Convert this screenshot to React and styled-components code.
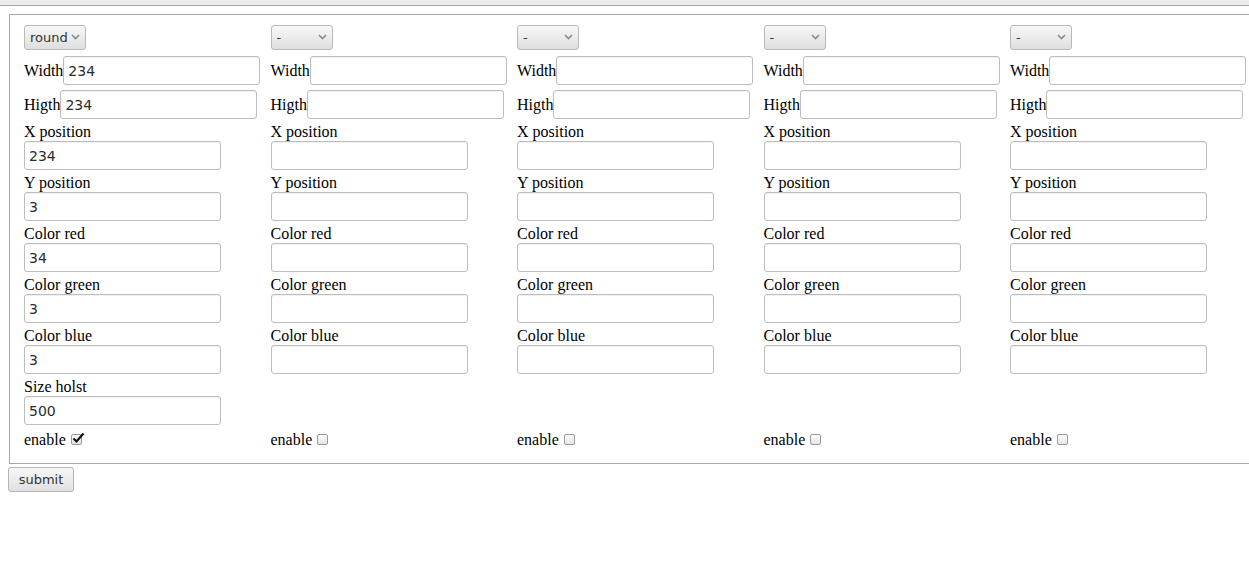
import React from "react";
import styled, { createGlobalStyle } from "styled-components";

const GlobalStyle = createGlobalStyle`
  html, body {
    margin: 0;
    padding: 0;
    background: #ffffff;
    overflow: hidden;
  }
  body {
    font-family: "Liberation Serif", "Times New Roman", serif;
    font-size: 16px;
    color: #000;
  }
`;

const TopBar = styled.div`
  height: 5px;
  background: #ececec;
  border-bottom: 1px solid #a8a8a8;
`;

const Page = styled.form`
  padding: 8px 0 0 8px;
`;

const Fieldset = styled.fieldset`
  margin: 0 0 3px 1px;
  width: 1262px;
  padding: 10px 0 14px 14px;
  border: 1px solid #a9a9a9;
  box-sizing: border-box;
  min-width: 0;
`;

const Columns = styled.div`
  display: grid;
  grid-template-columns: repeat(5, 246.5px);
  align-items: stretch;
`;

const Column = styled.div`
  display: flex;
  flex-direction: column;
  align-items: flex-start;
`;

const SelectWrap = styled.div`
  position: relative;
  width: 62px;
  height: 25px;
  margin-bottom: 6px;
`;

const Select = styled.select`
  appearance: none;
  width: 62px;
  height: 25px;
  box-sizing: border-box;
  padding: 0 0 0 5px;
  border: 1px solid #b9b9b9;
  border-radius: 3px;
  background: linear-gradient(#f8f8f8, #dedede);
  font-family: "DejaVu Sans", Verdana, sans-serif;
  font-size: 13px;
  color: #333;
  outline: none;
`;

const Chevron = styled.svg`
  position: absolute;
  right: 6px;
  top: 9px;
  width: 9px;
  height: 6px;
  pointer-events: none;
`;

const InlineRow = styled.label`
  display: flex;
  align-items: center;
  height: 29px;
  margin-bottom: ${(p) => p.$after}px;
  line-height: 18px;
  white-space: nowrap;
`;

const FieldBlock = styled.label`
  display: flex;
  flex-direction: column;
  align-items: flex-start;
`;

const FieldLabel = styled.span`
  display: block;
  height: 18px;
  line-height: 18px;
`;

const TextInput = styled.input`
  width: 197px;
  height: 29px;
  box-sizing: border-box;
  margin: 0 0 ${(p) => (p.$inline ? 0 : 4)}px 0;
  padding: 0 4px;
  border: 1px solid #bdbdbd;
  border-radius: 3px;
  box-shadow: inset 0 1px 1px rgba(0, 0, 0, 0.06);
  background: #fff;
  font-family: "DejaVu Sans", Verdana, sans-serif;
  font-size: 14px;
  color: #2b2b2b;
  outline: none;
`;

const EnableRow = styled.label`
  margin-top: auto;
  padding-top: 2px;
  display: flex;
  align-items: center;
  gap: 5px;
  height: 18px;
  line-height: 18px;
`;

const Box = styled.span`
  position: relative;
  display: inline-block;
  width: 11px;
  height: 11px;
  margin-top: -2px;
  box-sizing: border-box;
  border: 1px solid #9a9a9a;
  border-radius: 2px;
  background: linear-gradient(#fdfdfd, #e4e4e4);
`;

const Tick = styled.svg`
  position: absolute;
  left: 0px;
  top: -3px;
  width: 13px;
  height: 12px;
`;

const SubmitButton = styled.button`
  margin-left: 0;
  width: 66px;
  height: 25px;
  padding: 0;
  border: 1px solid #b5b5b5;
  border-radius: 3px;
  background: linear-gradient(#f7f7f7, #e0e0e0);
  font-family: "DejaVu Sans", Verdana, sans-serif;
  font-size: 13px;
  color: #333;
`;

const columns = [
  {
    shape: "round",
    width: "234",
    height: "234",
    x: "234",
    y: "3",
    red: "34",
    green: "3",
    blue: "3",
    holst: "500",
    enabled: true,
  },
  { shape: "-", enabled: false },
  { shape: "-", enabled: false },
  { shape: "-", enabled: false },
  { shape: "-", enabled: false },
];

const stacked = [
  ["X position", "x"],
  ["Y position", "y"],
  ["Color red", "red"],
  ["Color green", "green"],
  ["Color blue", "blue"],
];

function ShapeSelect({ value }) {
  return (
    <SelectWrap>
      <Select defaultValue={value}>
        <option value="-">-</option>
        <option value="round">round</option>
        <option value="square">square</option>
      </Select>
      <Chevron viewBox="0 0 9 6">
        <polyline points="1,1 4.5,4.5 8,1" fill="none" stroke="#8a8a8a" strokeWidth="1.6" />
      </Chevron>
    </SelectWrap>
  );
}

function Checkbox({ checked }) {
  return (
    <Box>
      {checked && (
        <Tick viewBox="0 0 13 12">
          <path d="M1.5 6.5 L4.5 9.5 L11.5 1.5" fill="none" stroke="#111" strokeWidth="2.2" strokeLinejoin="miter" />
        </Tick>
      )}
    </Box>
  );
}

function ShapeColumn({ data, first }) {
  return (
    <Column>
      <ShapeSelect value={data.shape} />
      <InlineRow $after={5}>
        Width
        <TextInput $inline defaultValue={data.width || ""} />
      </InlineRow>
      <InlineRow $after={4}>
        Higth
        <TextInput $inline defaultValue={data.height || ""} />
      </InlineRow>
      {stacked.map(([label, key]) => (
        <FieldBlock key={key}>
          <FieldLabel>{label}</FieldLabel>
          <TextInput defaultValue={data[key] || ""} />
        </FieldBlock>
      ))}
      {first && (
        <FieldBlock>
          <FieldLabel>Size holst</FieldLabel>
          <TextInput defaultValue={data.holst} />
        </FieldBlock>
      )}
      <EnableRow>
        enable
        <Checkbox checked={data.enabled} />
      </EnableRow>
    </Column>
  );
}

export default function App() {
  return (
    <>
      <GlobalStyle />
      <TopBar />
      <Page onSubmit={(e) => e.preventDefault()}>
        <Fieldset>
          <Columns>
            {columns.map((c, i) => (
              <ShapeColumn key={i} data={c} first={i === 0} />
            ))}
          </Columns>
        </Fieldset>
        <SubmitButton type="submit">submit</SubmitButton>
      </Page>
    </>
  );
}
